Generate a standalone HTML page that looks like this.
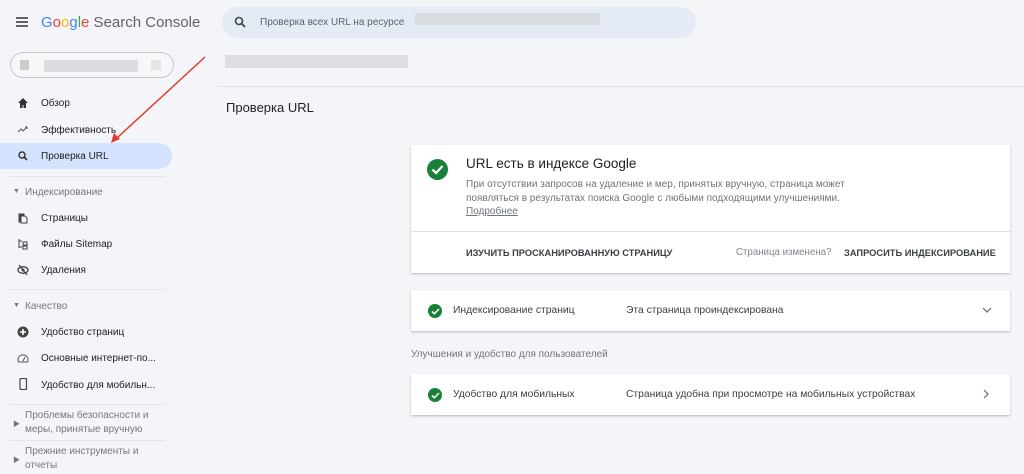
<!DOCTYPE html>
<html><head><meta charset="utf-8"><style>
*{box-sizing:border-box;margin:0;padding:0}
body{width:1024px;height:474px;overflow:hidden;background:#f3f5f9;font-family:"Liberation Sans","Noto Sans CJK SC",sans-serif;color:#202124;position:relative}
.abs{position:absolute}
.nav{font-size:10px;color:#202124}
.sec{font-size:10px;color:#777}
.ico{position:absolute;left:17px;width:12px;height:12px}
.card{position:absolute;left:411px;width:599px;background:#fff;box-shadow:0 1px 2px rgba(0,0,0,.25)}
.chk{position:absolute;width:14px;height:14px;border-radius:50%;background:#188038}
.hr{position:absolute;left:10px;width:155px;height:1px;background:#e3e5e8}
</style></head><body>
<div class="abs" style="left:16px;top:17px;width:12px;height:2px;background:#5f6368;box-shadow:0 4px 0 #5f6368,0 8px 0 #5f6368"></div>
<div class="abs" style="left:41px;top:14px;font-size:15px;color:#5f6368;white-space:nowrap"><span style="color:#4285f4">G</span><span style="color:#ea4335">o</span><span style="color:#fbbc05">o</span><span style="color:#4285f4">g</span><span style="color:#34a853">l</span><span style="color:#ea4335">e</span> Search Console</div>
<div class="abs" style="left:222px;top:7px;width:474px;height:31px;border-radius:16px;background:#e5ebf5"></div>
<svg class="abs" style="left:234px;top:16px" width="12" height="12" viewBox="0 0 12 12"><circle cx="5" cy="5" r="3.5" fill="none" stroke="#444" stroke-width="1.6"/><path d="M7.5 7.5L11 11" stroke="#444" stroke-width="1.8"/></svg>
<div class="abs" style="left:260px;top:17px;font-size:10px;color:#5f6368">Проверка всех URL на ресурсе</div>
<div class="abs" style="left:415px;top:13px;width:185px;height:12px;background:#d8dbe0"></div>
<div class="abs" style="left:10px;top:52px;width:164px;height:26px;border:1px solid #c6c9ce;border-radius:13px;background:#f6f7f9"></div>
<div class="abs" style="left:20px;top:60px;width:9px;height:10px;background:#ccc"></div>
<div class="abs" style="left:44px;top:60px;width:94px;height:12px;background:#dcdde0"></div>
<div class="abs" style="left:151px;top:60px;width:10px;height:10px;background:#e4e5e7"></div>
<div class="abs" style="left:0;top:143px;width:172px;height:26px;background:#d3e3fd;border-radius:0 13px 13px 0"></div>
<svg class="ico" style="top:97px" viewBox="0 0 12 12"><path d="M6 1L1 6h2v5h2.5V8h1v3H9V6h2z" fill="#333"/></svg>
<div class="abs nav" style="left:41px;top:98px">Обзор</div>
<svg class="ico" style="top:123px" viewBox="0 0 12 12"><path d="M1 9l3-3 2 2 4-4M8 4h2v2" fill="none" stroke="#555" stroke-width="1"/></svg>
<div class="abs nav" style="left:41px;top:125px">Эффективность</div>
<svg class="ico" style="top:150px" viewBox="0 0 12 12"><circle cx="5" cy="5" r="3" fill="none" stroke="#333" stroke-width="1.4"/><path d="M7 7l3 3" stroke="#333" stroke-width="1.6"/></svg>
<div class="abs nav" style="left:41px;top:151px">Проверка URL</div>
<div class="hr" style="top:176px"></div>
<div class="abs sec" style="left:13px;top:188px;font-size:7px">▼</div>
<div class="abs sec" style="left:25px;top:187px">Индексирование</div>
<svg class="ico" style="top:212px" viewBox="0 0 12 12"><path d="M2 2h5v1H3v7H2zM4 4h4l2 2v5H4z" fill="none" stroke="#444" stroke-width="1"/></svg>
<div class="abs nav" style="left:41px;top:213px">Страницы</div>
<svg class="ico" style="top:238px" viewBox="0 0 12 12"><path d="M2 1v9M2 3h3M2 9h3M6 4h4v3H6zM6 8h4v3H6z" fill="none" stroke="#444" stroke-width="1"/></svg>
<div class="abs nav" style="left:41px;top:239px">Файлы Sitemap</div>
<svg class="ico" style="top:264px" viewBox="0 0 12 12"><ellipse cx="6" cy="6" rx="5" ry="3.3" fill="none" stroke="#444" stroke-width="1.3"/><circle cx="6" cy="6" r="1.5" fill="#444"/><path d="M2 1l8 10" stroke="#444" stroke-width="1.3"/></svg>
<div class="abs nav" style="left:41px;top:265px">Удаления</div>
<div class="hr" style="top:289px"></div>
<div class="abs sec" style="left:13px;top:302px;font-size:7px">▼</div>
<div class="abs sec" style="left:25px;top:301px">Качество</div>
<svg class="ico" style="top:326px" viewBox="0 0 12 12"><circle cx="6" cy="6" r="5.5" fill="#444"/><path d="M6 3v6M3 6h6" stroke="#fff" stroke-width="1.6"/></svg>
<div class="abs nav" style="left:41px;top:327px">Удобство страниц</div>
<svg class="ico" style="top:352px" viewBox="0 0 12 12"><path d="M1.5 10A5 5 0 1 1 10.5 10z" fill="none" stroke="#555" stroke-width="1"/><path d="M6 9l2-4" stroke="#555"/></svg>
<div class="abs nav" style="left:41px;top:353px">Основные интернет-по...</div>
<svg class="ico" style="top:378px" viewBox="0 0 12 12"><rect x="3" y="0.5" width="6.5" height="11" rx="1" fill="none" stroke="#444" stroke-width="1.2"/></svg>
<div class="abs nav" style="left:41px;top:380px">Удобство для мобильн...</div>
<div class="hr" style="top:404px"></div>
<div class="abs sec" style="left:13px;top:419px;font-size:7px">▶</div>
<div class="abs sec" style="left:25px;top:409px;line-height:14px">Проблемы безопасности и<br>меры, принятые вручную</div>
<div class="hr" style="top:440px"></div>
<div class="abs sec" style="left:13px;top:455px;font-size:7px">▶</div>
<div class="abs sec" style="left:25px;top:445px;line-height:14px">Прежние инструменты и<br>отчеты</div>
<div class="abs" style="left:225px;top:55px;width:183px;height:13px;background:#dcdee2"></div>
<div class="abs" style="left:218px;top:86px;width:806px;height:1px;background:#e0e3e7"></div>
<div class="abs" style="left:226px;top:100px;font-size:13px;color:#202124">Проверка URL</div>
<div class="card" style="top:145px;height:128px">
 <div class="chk" style="left:16px;top:14px;width:21px;height:21px"></div>
 <svg class="abs" style="left:20px;top:19px" width="13" height="11" viewBox="0 0 13 11"><path d="M1.5 5.5l3.5 3.5 6.5-7" fill="none" stroke="#fff" stroke-width="2.2"/></svg>
 <div class="abs" style="left:55px;top:11px;font-size:13.5px;color:#202124">URL есть в индексе Google</div>
 <div class="abs" style="left:55px;top:33px;font-size:10px;color:#70757a;line-height:13.5px">При отсутствии запросов на удаление и мер, принятых вручную, страница может<br>появляться в результатах поиска Google с любыми подходящими улучшениями.<br><u>Подробнее</u></div>
 <div class="abs" style="left:0;top:86px;width:599px;height:1px;background:#e0e0e0"></div>
 <div class="abs" style="left:55px;top:103px;font-size:9.3px;font-weight:bold;color:#3c4043">ИЗУЧИТЬ ПРОСКАНИРОВАННУЮ СТРАНИЦУ</div>
 <div class="abs" style="left:325px;top:102px;font-size:9.7px;color:#80868b">Страница изменена?</div>
 <div class="abs" style="left:433px;top:103px;font-size:9.3px;font-weight:bold;color:#3c4043">ЗАПРОСИТЬ ИНДЕКСИРОВАНИЕ</div>
</div>
<div class="card" style="top:290px;height:41px">
 <div class="chk" style="left:17px;top:14px"></div>
 <svg class="abs" style="left:20px;top:18px" width="9" height="7" viewBox="0 0 9 7"><path d="M1 3.5l2.3 2.3L8 1" fill="none" stroke="#fff" stroke-width="1.6"/></svg>
 <div class="abs" style="left:42px;top:15px;font-size:10.3px;color:#3c4043">Индексирование страниц</div>
 <div class="abs" style="left:215px;top:15px;font-size:10.3px;color:#3c4043">Эта страница проиндексирована</div>
 <svg class="abs" style="left:571px;top:17px" width="10" height="6" viewBox="0 0 10 6"><path d="M1 1l4 4 4-4" fill="none" stroke="#666" stroke-width="1.2"/></svg>
</div>
<div class="abs" style="left:411px;top:349px;font-size:10px;color:#70757a">Улучшения и удобство для пользователей</div>
<div class="card" style="top:374px;height:41px">
 <div class="chk" style="left:17px;top:14px"></div>
 <svg class="abs" style="left:20px;top:18px" width="9" height="7" viewBox="0 0 9 7"><path d="M1 3.5l2.3 2.3L8 1" fill="none" stroke="#fff" stroke-width="1.6"/></svg>
 <div class="abs" style="left:42px;top:15px;font-size:10.3px;color:#3c4043">Удобство для мобильных</div>
 <div class="abs" style="left:215px;top:15px;font-size:10.3px;color:#3c4043">Страница удобна при просмотре на мобильных устройствах</div>
 <svg class="abs" style="left:572px;top:15px" width="6" height="10" viewBox="0 0 6 10"><path d="M1 1l4 4-4 4" fill="none" stroke="#666" stroke-width="1.2"/></svg>
</div>
<svg class="abs" style="left:0;top:0" width="1024" height="474"><path d="M205 57L117 138" stroke="#e53b2c" stroke-width="1.5"/><path d="M111 143l3-10 6 6z" fill="#e53b2c"/></svg>
</body></html>
